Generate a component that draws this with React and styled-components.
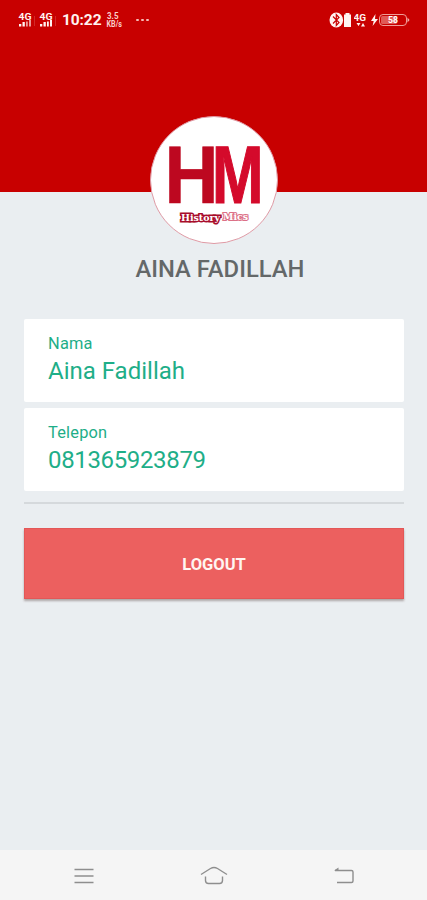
import styled, { createGlobalStyle } from "styled-components";

const GlobalStyle = createGlobalStyle`
  * {
    box-sizing: border-box;
  }

  body {
    margin: 0;
    background: #eaeef1;
    font-family: Roboto, "Liberation Sans", sans-serif;
  }
`;

const Screen = styled.div`
  display: flex;
  flex-direction: column;
  width: 427px;
  height: 900px;
  overflow: hidden;
  background: #eaeef1;
`;

const Header = styled.header`
  flex: none;
  height: 192px;
  background: #c80000;
`;

const StatusBar = styled.div`
  display: flex;
  align-items: center;
  justify-content: space-between;
  height: 40px;
  padding: 0 16px 0 18px;
  color: #fff3f1;
`;

const StatusGroup = styled.div`
  display: flex;
  align-items: center;
`;

const Clock = styled.span`
  width: 40px;
  margin-left: 2px;
  font-size: 15.5px;
  font-weight: 700;
  line-height: 20px;
  letter-spacing: -0.1px;
`;

const SpeedIcon = styled.svg`
  width: 18px;
  height: 18px;
  margin-left: 4px;
  fill: #f9cfcb;
`;

const Dots = styled.div`
  display: flex;
  gap: 2px;
  margin-left: 12px;

  i {
    width: 3px;
    height: 2px;
    border-radius: 1px;
    background: #f6bcb7;
  }
`;

const Profile = styled.section`
  display: flex;
  flex-direction: column;
  align-items: center;
  height: 127px;
`;

const Avatar = styled.div`
  flex: none;
  width: 128px;
  height: 128px;
  margin-top: -76px;
  overflow: hidden;
  border: 1px solid #df9aa5;
  border-radius: 50%;
  background: #fff;

  svg {
    display: block;
  }
`;

const Name = styled.h1`
  margin: 11px 0 0 13px;
  color: #646869;
  font-size: 23.8px;
  font-weight: 500;
  line-height: 28px;
  white-space: nowrap;
`;

const Content = styled.main`
  display: flex;
  flex: 1;
  flex-direction: column;
  padding: 0 23px 0 24px;
`;

const Card = styled.div`
  height: 83px;
  margin-bottom: 6px;
  padding: 15px 24px 0;
  border-radius: 2px;
  background: #fff;
  color: #1eae88;
`;

const Label = styled.div`
  font-size: 16.4px;
  line-height: 19px;
  letter-spacing: 0.2px;
`;

const Value = styled.div`
  margin-top: 3px;
  font-size: 24px;
  line-height: 30px;
  letter-spacing: ${({ $spacing }) => $spacing || "0"};
`;

const Divider = styled.hr`
  width: 100%;
  height: 2px;
  margin: 5px 0 24px;
  border: none;
  background: #d5d9dc;
`;

const LogoutButton = styled.button`
  height: 71px;
  padding: 2px 0 0;
  border: 1px solid #e35757;
  background: #ec605f;
  box-shadow: 0 2px 2px rgba(100, 80, 75, 0.45);
  color: #fff5f1;
  font-family: inherit;
  font-size: 16.5px;
  font-weight: 700;
`;

const NavBar = styled.nav`
  display: flex;
  flex: none;
  align-items: center;
  justify-content: space-between;
  height: 50px;
  padding: 1px 69px 0 70px;
  background: #f5f5f5;
`;

const NavIcon = styled.svg`
  width: 28px;
  height: 28px;
  fill: none;
  stroke: #8e8e8e;
  stroke-width: 1.4;
`;

const Signal = ({ bars }) => (
  <svg width="21" height="18" viewBox="0 0 21 18" fill="currentColor">
    <text x="0.5" y="8.5" fontSize="9.5" fontWeight="700" textLength="13" lengthAdjust="spacingAndGlyphs">
      4G
    </text>
    <path d="M1 13h2.300v2.500H1z M4.500 11h2.300v4.500H4.500z" />
    <path d="M8 10.500h1.800v5H8z M11 9h2v6.500h-2z" opacity={bars > 2 ? 1 : 0.65} />
    <path d="M16.500 5v10" stroke="#e07772" strokeWidth="0.7" opacity="0.5" />
  </svg>
);

const Speed = () => (
  <SpeedIcon viewBox="0 0 18 18">
    <text x="1" y="8" fontSize="8.5" fontWeight="700" textLength="11.5" lengthAdjust="spacingAndGlyphs">
      3.5
    </text>
    <text x="0.5" y="16" fontSize="8.5" fontWeight="700" textLength="15.5" lengthAdjust="spacingAndGlyphs">
      KB/s
    </text>
  </SpeedIcon>
);

const Bluetooth = () => (
  <svg width="25" height="18" viewBox="0 0 25 18">
    <ellipse cx="7.3" cy="9" rx="6.8" ry="7.6" fill="currentColor" />
    <path d="M4 5.500l6 6L7.300 14.500v-11L10 6.500l-6 6" fill="none" stroke="#c80000" strokeWidth="1.2" />
    <path d="M16.500 2h4v1.500h1.500V16h-7V3.500h1.500z" fill="currentColor" />
  </svg>
);

const Network = () => (
  <svg width="16" height="17" viewBox="0 0 16 17" fill="currentColor">
    <text x="-0.5" y="8.5" fontSize="9" fontWeight="700" textLength="12.5" lengthAdjust="spacingAndGlyphs">
      4G
    </text>
    <path d="M2.500 11h4l-2 3z M7 14.500h4l-2-3.500z" />
  </svg>
);

const Battery = () => (
  <svg width="41" height="16" viewBox="0 0 41 16">
    <path d="M5.500 2L1 9h2.700L2.600 14 8 7H5z" fill="currentColor" />
    <rect x="9.5" y="2.5" width="27" height="11" rx="3.5" fill="#c80000" stroke="#ef9d97" />
    <path d="M12.500 4h14v8h-14q-1.500 0-1.500-1.500v-5Q11 4 12.500 4z" fill="#e05a56" />
    <path d="M37.500 5.500l2 2.500-2 2.500z" fill="#f3b6b1" />
    <text x="18" y="11.3" fontSize="9" fontWeight="700" fill="#fff" textLength="10" lengthAdjust="spacingAndGlyphs">
      58
    </text>
  </svg>
);

const Logo = () => (
  <svg width="126" height="126" viewBox="151 117 126 126">
    <g fontFamily="Liberation Sans, sans-serif" fontSize="81" fontWeight="700">
      <text x="164.5" y="203" fill="#bd0820" stroke="#bd0820" strokeWidth="0.6" textLength="54" lengthAdjust="spacingAndGlyphs">
        H
      </text>
      <text x="212" y="202.5" fill="#d40a2b" stroke="#d40a2b" strokeWidth="1.2" textLength="51.5" lengthAdjust="spacingAndGlyphs">
        M
      </text>
    </g>
    <g fontFamily="DejaVu Serif, serif" fontWeight="700">
      <text x="181" y="221" fontSize="9" fill="#fff" stroke="#a80c2a" strokeWidth="3" paintOrder="stroke" textLength="39" lengthAdjust="spacingAndGlyphs">
        History
      </text>
      <text x="223" y="219.5" fontSize="8.5" fill="#fff" stroke="#dc7187" strokeWidth="2" paintOrder="stroke" textLength="25" lengthAdjust="spacingAndGlyphs">
        Mics
      </text>
    </g>
  </svg>
);

const Field = ({ label, value, spacing }) => (
  <Card>
    <Label>{label}</Label>
    <Value $spacing={spacing}>{value}</Value>
  </Card>
);

const App = () => {
  return (
    <>
      <GlobalStyle />
      <Screen>
        <Header>
          <StatusBar>
            <StatusGroup>
              <Signal bars={2} />
              <Signal bars={4} />
              <Clock>10:22</Clock>
              <Speed />
              <Dots>
                <i />
                <i />
                <i />
              </Dots>
            </StatusGroup>
            <StatusGroup>
              <Bluetooth />
              <Network />
              <Battery />
            </StatusGroup>
          </StatusBar>
        </Header>

        <Profile>
          <Avatar>
            <Logo />
          </Avatar>
          <Name>AINA FADILLAH</Name>
        </Profile>

        <Content>
          <Field label="Nama" value="Aina Fadillah" spacing="0" />
          <Field label="Telepon" value="081365923879" spacing="-0.35px" />
          <Divider />
          <LogoutButton type="button">LOGOUT</LogoutButton>
        </Content>

        <NavBar>
          <NavIcon viewBox="0 0 28 28">
            <path d="M4.500 7.500h19M4.500 14h19M4.500 20.500h19" />
          </NavIcon>
          <NavIcon viewBox="0 0 28 28">
            <path d="M1 12.500L10.500 6.500q3.500-2 7 0L27 12.500M5.500 14.500v4q0 3 3 3h11q3 0 3-3v-4" />
          </NavIcon>
          <NavIcon viewBox="0 0 28 28">
            <path d="M5 8.500h16.500q1.500 0 1.500 1.500v9q0 1.500-1.500 1.500H7" />
            <path d="M4 8.500L8.500 5.500v3z" fill="#8e8e8e" stroke="none" />
          </NavIcon>
        </NavBar>
      </Screen>
    </>
  );
};

export default App;
